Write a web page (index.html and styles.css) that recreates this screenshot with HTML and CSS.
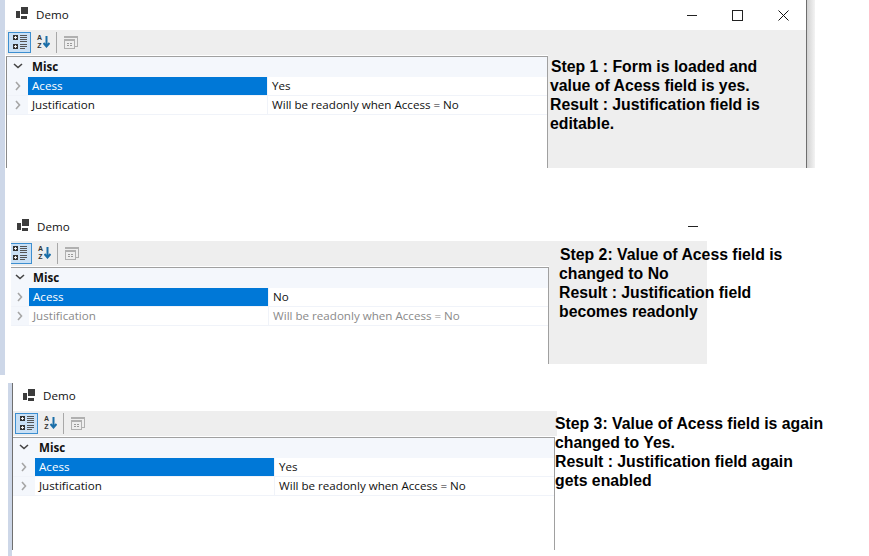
FILE: index.html
```html
<!DOCTYPE html>
<html lang="en">
<head>
    <meta charset="UTF-8">
    <title>Demo steps</title>
    <link rel="stylesheet" href="styles.css">
</head>
<body>
    <svg class="defs" width="0" height="0">
        <symbol id="icon-app" viewBox="0 0 12 12">
            <rect x="0" y="4" width="4" height="7" fill="#3c3c3c"/>
            <rect x="5" y="0" width="7" height="7" fill="#3c3c3c"/>
            <rect x="5" y="9" width="6" height="3" fill="#3c3c3c"/>
        </symbol>
        <symbol id="icon-cat" viewBox="0 0 14 14">
            <rect x="0" y="0" width="5" height="5" fill="#333"/>
            <rect x="0" y="9" width="5" height="5" fill="#333"/>
            <path d="M1 2.500h3M2.500 1v3M1 11.500h3M2.500 10v3" stroke="#fff" stroke-width="0.900"/>
            <path d="M7 0.500h7M7 2.500h7M7 4.500h7M7 6.500h7M7 9.500h7M7 11.500h7M7 13.500h5" stroke="#555" stroke-width="1"/>
        </symbol>
        <symbol id="icon-arrow" viewBox="0 0 7 12">
            <path d="M3.500 0v10.500M0.500 7l3 3.500 3-3.500" fill="none" stroke="#1a6ea8" stroke-width="2"/>
        </symbol>
        <symbol id="icon-pages" viewBox="0 0 14 13">
            <path d="M0 0h14v2H0zM13 2h1v9h-3v-1h2zM0 3h11v10H0z" fill="#b0b0b0"/>
            <path d="M1 5h9v7H1z" fill="#eee"/>
            <path d="M3 7h2v1H3zM6 7h2v1H6zM3 9h2v1H3zM6 9h2v1H6z" fill="#9a9a9a"/>
        </symbol>
        <symbol id="chev-down" viewBox="0 0 10 6">
            <path d="M1 1l4 3.500L9 1" fill="none" stroke="#444" stroke-width="1.600"/>
        </symbol>
        <symbol id="chev-right" viewBox="0 0 6 10">
            <path d="M1 1l3.500 4L1 9" fill="none" stroke="#a6a6a6" stroke-width="1.600"/>
        </symbol>
    </svg>

    <div class="strip strip-top"></div>
    <div class="strip strip-low"></div>

    <!-- step 1 -->
    <section class="shot shot-one">
        <header class="titlebar">
            <svg class="app-icon"><use href="#icon-app"/></svg>
            <span class="title">Demo</span>
            <div class="win-btns">
                <span class="btn-min"></span>
                <span class="btn-max"></span>
                <svg class="btn-close" viewBox="0 0 11 11"><path d="M0.500 0.500l10 10M10.500 0.500l-10 10" stroke="#111" fill="none"/></svg>
            </div>
        </header>
        <div class="body">
            <div class="toolbar">
                <span class="tool-on"><svg class="cat"><use href="#icon-cat"/></svg></span>
                <span class="az"><span class="az-letters"><b>A</b><b>Z</b></span><svg class="arrow"><use href="#icon-arrow"/></svg></span>
                <span class="tool-sep"></span>
                <svg class="pages"><use href="#icon-pages"/></svg>
            </div>
            <div class="grid">
                <div class="row cat-row"><span class="gutter"><svg class="down"><use href="#chev-down"/></svg></span><span class="cat-name">Misc</span></div>
                <div class="row"><span class="gutter"><svg class="right"><use href="#chev-right"/></svg></span><span class="name selected">Acess</span><span class="value">Yes</span></div>
                <div class="row"><span class="gutter"><svg class="right"><use href="#chev-right"/></svg></span><span class="name">Justification</span><span class="value">Will be readonly when Access = No</span></div>
            </div>
        </div>
        <div class="win-shadow"></div>
        <p class="note">Step 1 : Form is loaded and<br>value of Acess field is yes.<br>Result : Justification field is<br>editable.</p>
    </section>

    <!-- step 2 -->
    <section class="shot shot-two">
        <header class="titlebar">
            <svg class="app-icon"><use href="#icon-app"/></svg>
            <span class="title">Demo</span>
            <div class="win-btns"><span class="btn-min"></span></div>
        </header>
        <div class="body">
            <div class="toolbar">
                <span class="tool-on"><svg class="cat"><use href="#icon-cat"/></svg></span>
                <span class="az"><span class="az-letters"><b>A</b><b>Z</b></span><svg class="arrow"><use href="#icon-arrow"/></svg></span>
                <span class="tool-sep"></span>
                <svg class="pages"><use href="#icon-pages"/></svg>
            </div>
            <div class="grid">
                <div class="row cat-row"><span class="gutter"><svg class="down"><use href="#chev-down"/></svg></span><span class="cat-name">Misc</span></div>
                <div class="row"><span class="gutter"><svg class="right"><use href="#chev-right"/></svg></span><span class="name selected">Acess</span><span class="value">No</span></div>
                <div class="row readonly"><span class="gutter"><svg class="right"><use href="#chev-right"/></svg></span><span class="name">Justification</span><span class="value">Will be readonly when Access = No</span></div>
            </div>
        </div>
        <p class="note">Step 2: Value of Acess field is<br>changed to No<br>Result : Justification field<br>becomes readonly</p>
    </section>

    <!-- step 3 -->
    <section class="shot shot-three">
        <header class="titlebar">
            <svg class="app-icon"><use href="#icon-app"/></svg>
            <span class="title">Demo</span>
        </header>
        <div class="body">
            <div class="toolbar">
                <span class="tool-on"><svg class="cat"><use href="#icon-cat"/></svg></span>
                <span class="az"><span class="az-letters"><b>A</b><b>Z</b></span><svg class="arrow"><use href="#icon-arrow"/></svg></span>
                <span class="tool-sep"></span>
                <svg class="pages"><use href="#icon-pages"/></svg>
            </div>
            <div class="grid">
                <div class="row cat-row"><span class="gutter"><svg class="down"><use href="#chev-down"/></svg></span><span class="cat-name">Misc</span></div>
                <div class="row"><span class="gutter"><svg class="right"><use href="#chev-right"/></svg></span><span class="name selected">Acess</span><span class="value">Yes</span></div>
                <div class="row"><span class="gutter"><svg class="right"><use href="#chev-right"/></svg></span><span class="name">Justification</span><span class="value">Will be readonly when Access = No</span></div>
            </div>
        </div>
        <p class="note">Step 3: Value of Acess field is again<br>changed to Yes.<br>Result : Justification field again<br>gets enabled</p>
    </section>
</body>
</html>
```

FILE: styles.css
```css
html, body {
    margin: 0;
    height: 100%;
    overflow: hidden;
    background: #fff;
    font-family: "Open Sans", "Noto Sans", sans-serif;
}

.defs {
    position: absolute;
}

.strip {
    position: absolute;
    background: #cdd7e8;
}

.strip-top {
    left: 0;
    top: 0;
    width: 5px;
    height: 375px;
}

.strip-low {
    left: 8px;
    top: 383px;
    width: 4px;
    height: 173px;
}

/* each pasted screenshot sits on its own spot */
.shot {
    position: absolute;
}

.shot-one {
    left: 6px;
    top: 0;
    width: 800px;
    height: 168px;
    border-right: 1px solid #6e6e6e;
}

.shot-two {
    left: 11px;
    top: 211px;
    width: 696px;
    height: 153px;
}

.shot-three {
    left: 12px;
    top: 383px;
    width: 544px;
    height: 167px;
    border-left: 1px solid #707070;
}

.win-shadow {
    position: absolute;
    left: 100%;
    top: 0;
    bottom: 0;
    margin-left: 1px;
    width: 8px;
    background: linear-gradient(to right, #d2d2d2, #f3f3f3);
}

.titlebar {
    height: 30px;
    display: flex;
    align-items: center;
    background: #fff;
    box-sizing: border-box;
}

.shot-one .titlebar {
    padding-left: 10px;
}

.shot-two .titlebar {
    padding-left: 6px;
    padding-top: 2px;
}

.shot-three .titlebar {
    height: 28px;
    padding-left: 10px;
    padding-bottom: 1px;
}

.app-icon {
    width: 12px;
    height: 12px;
    margin-right: 8px;
    margin-bottom: 4px;
}

.title {
    font-size: 11.6px;
    color: #111;
    margin-bottom: 2px;
}

.win-btns {
    margin-left: auto;
    display: flex;
    align-items: center;
}

.btn-min {
    display: block;
    width: 10px;
    height: 1px;
    background: #222;
}

.btn-max {
    display: block;
    width: 9px;
    height: 9px;
    border: 1px solid #222;
    margin-left: 35px;
}

.btn-close {
    display: block;
    width: 11px;
    height: 11px;
    margin-left: 35px;
    margin-right: 17px;
}

.shot-two .btn-min {
    margin-right: 9px;
    margin-bottom: 2px;
}

.body {
    background: #eee;
    height: 138px;
}

.shot-two .body {
    height: 123px;
}

.shot-three .body {
    height: 25px;
}

.toolbar {
    height: 24px;
    display: flex;
    align-items: center;
    padding-left: 2px;
}

.shot-two .toolbar {
    padding-left: 0;
}

.tool-on {
    width: 23px;
    height: 21px;
    display: flex;
    align-items: center;
    justify-content: center;
    flex: none;
    background: #c9e0f5;
    border: 1px solid #3d8fd1;
    box-sizing: border-box;
}

.shot-two .tool-on {
    width: 21px;
    padding-right: 2px;
    border-left: 0;
}

.cat {
    width: 14px;
    height: 14px;
}

.az {
    width: 15px;
    height: 14px;
    margin-left: 4px;
    display: flex;
    align-items: center;
}

.az-letters {
    width: 9px;
    display: flex;
    flex-direction: column;
    align-items: center;
    font-family: "Liberation Sans", sans-serif;
    font-size: 7px;
    line-height: 8px;
    color: #333;
}

.arrow {
    width: 7px;
    height: 12px;
    margin-left: -1px;
}

.tool-sep {
    width: 1px;
    height: 21px;
    margin-left: 6px;
    background: #a8a8a8;
}

.pages {
    width: 14px;
    height: 13px;
    margin-left: 7px;
}

.grid {
    width: 541px;
    height: 112px;
    margin-top: 2px;
    background: #fff;
    border-top: 1px solid #a0a0a0;
    border-right: 1px solid #a0a0a0;
    box-shadow: 0 -1px 0 #fff;
    box-sizing: border-box;
}

.shot-one .grid {
    width: 542px;
    border-left: 1px solid #8a8a8a;
}

.shot-two .grid {
    width: 538px;
    height: 97px;
}

.shot-three .grid {
    width: 542px;
    height: 113px;
}

.row {
    display: flex;
    height: 19px;
    font-size: 11.6px;
    color: #111;
    border-bottom: 1px solid #f0f3f9;
    box-sizing: border-box;
}

.cat-row {
    height: 20px;
    padding-bottom: 2px;
    background: #f4f7fc;
    border-bottom: 0;
    align-items: center;
}

.gutter {
    width: 21px;
    flex: none;
    background: #f4f7fc;
    display: flex;
    align-items: center;
    justify-content: center;
}

.shot-two .gutter {
    width: 18px;
}

.shot-three .gutter {
    width: 22px;
}

.down {
    width: 10px;
    height: 6px;
}

.right {
    width: 6px;
    height: 10px;
}

.cat-name {
    font-weight: bold;
    padding-left: 4px;
}

.name {
    width: 240px;
    padding-left: 4px;
    line-height: 18px;
    box-sizing: border-box;
    border-right: 1px solid #f0f3f9;
}

.selected {
    background: #0078d7;
    color: #fff;
}

.value {
    padding-left: 4px;
    line-height: 18px;
}

.readonly {
    color: #8a8a8a;
}

.note {
    position: absolute;
    margin: 0;
    font-family: "Liberation Sans", sans-serif;
    font-size: 15.800px;
    font-weight: bold;
    line-height: 19px;
    color: #000;
    white-space: nowrap;
    text-indent: 1px;
}

.shot-one .note {
    left: 544px;
    top: 57px;
}

.shot-two .note {
    left: 548px;
    top: 34px;
}

.shot-three .note {
    left: 542px;
    top: 31px;
    text-indent: 0;
}
```
